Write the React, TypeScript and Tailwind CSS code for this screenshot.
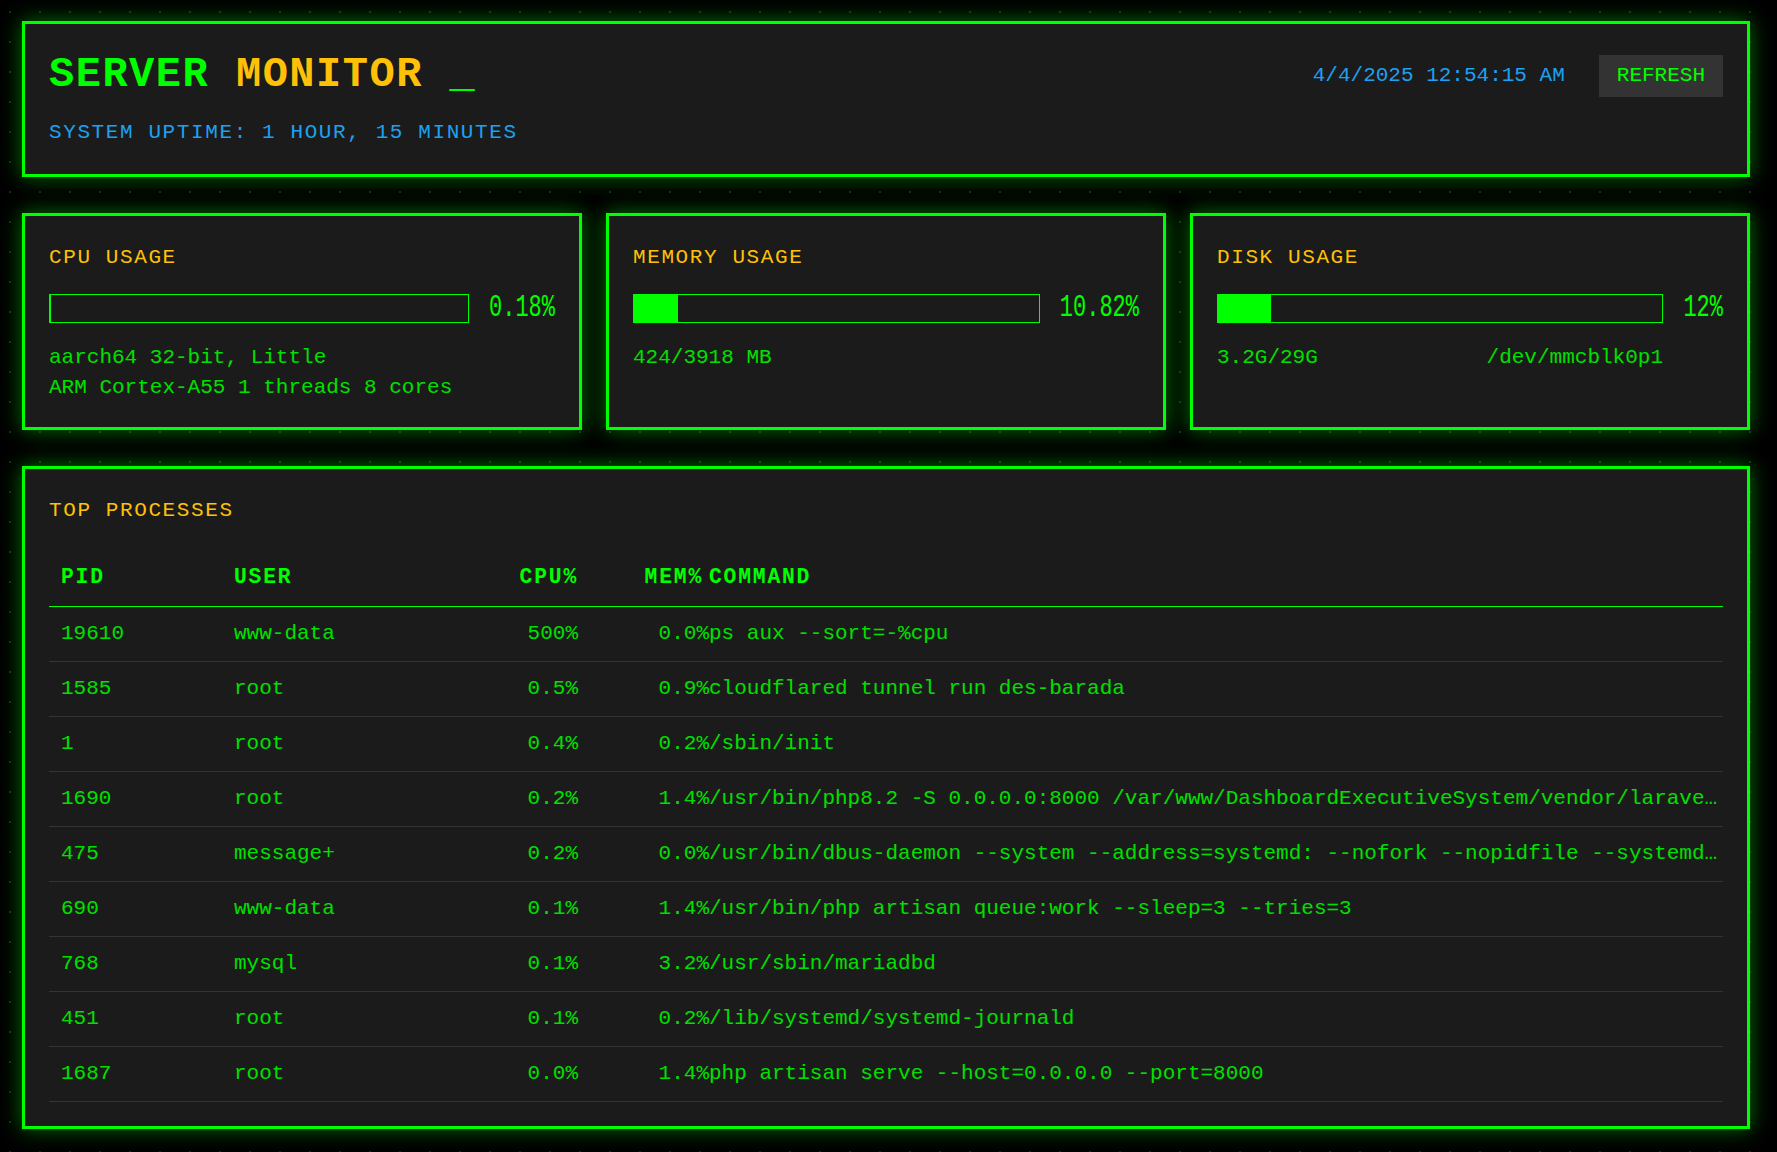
import React from "react";

type Proc = { pid: string; user: string; cpu: string; mem: string; cmd: string };

const PROCS: Proc[] = [
  { pid: "19610", user: "www-data", cpu: "500%", mem: "0.0%", cmd: "ps aux --sort=-%cpu" },
  { pid: "1585", user: "root", cpu: "0.5%", mem: "0.9%", cmd: "cloudflared tunnel run des-barada" },
  { pid: "1", user: "root", cpu: "0.4%", mem: "0.2%", cmd: "/sbin/init" },
  {
    pid: "1690",
    user: "root",
    cpu: "0.2%",
    mem: "1.4%",
    cmd: "/usr/bin/php8.2 -S 0.0.0.0:8000 /var/www/DashboardExecutiveSystem/vendor/laravel/framework/src/Illuminate/Foundation/resources/server.php",
  },
  {
    pid: "475",
    user: "message+",
    cpu: "0.2%",
    mem: "0.0%",
    cmd: "/usr/bin/dbus-daemon --system --address=systemd: --nofork --nopidfile --systemd-activation --syslog-only",
  },
  { pid: "690", user: "www-data", cpu: "0.1%", mem: "1.4%", cmd: "/usr/bin/php artisan queue:work --sleep=3 --tries=3" },
  { pid: "768", user: "mysql", cpu: "0.1%", mem: "3.2%", cmd: "/usr/sbin/mariadbd" },
  { pid: "451", user: "root", cpu: "0.1%", mem: "0.2%", cmd: "/lib/systemd/systemd-journald" },
  { pid: "1687", user: "root", cpu: "0.0%", mem: "1.4%", cmd: "php artisan serve --host=0.0.0.0 --port=8000" },
];

const box =
  "border-[3px] border-[#00ff00] bg-[#1b1b1b] p-6 shadow-[0_0_20px_rgba(0,255,0,0.45)]";

function Meter({ pct, label }: { pct: number; label: string }) {
  return (
    <div className="mt-[18px] flex h-[29px] items-center gap-5">
      <div className="h-full flex-1 border border-[#00ff00]">
        <div className="h-full bg-[#00ff00]" style={{ width: `${pct}%` }} />
      </div>
      <span className="inline-block scale-y-[1.4] font-['Liberation_Mono',monospace] text-[22px] leading-none text-[#00ff00]">
        {label}
      </span>
    </div>
  );
}

function Card({ title, pct, label, children }: { title: string; pct: number; label: string; children: React.ReactNode }) {
  return (
    <div className={box}>
      <div className="text-[21px] leading-[36px] tracking-[1.6px] text-[#ffc107]">{title}</div>
      <Meter pct={pct} label={label} />
      <div className="mt-[20px] text-[21px] leading-[30px] text-[#00e000]">{children}</div>
    </div>
  );
}

export default function App() {
  return (
    <div className="min-h-screen bg-black bg-[radial-gradient(circle,#0e300e_1px,transparent_1.6px)] bg-[size:30px_30px] bg-[position:-5px_-3px] font-['Courier_New','Nimbus_Mono_PS','FreeMono',Courier,'Liberation_Mono',monospace]">
      <div className="flex w-[1777px] flex-col gap-9 pb-6 pl-[22px] pr-[27px] pt-[21px]">
        <header className={box}>
          <div className="flex h-[55px] items-center justify-between">
            <h1 className="text-[42px] font-bold leading-[55px] tracking-[1.5px]">
              <span className="text-[#00ff00]">SERVER</span>
              <span className="text-[#ffc107]"> MONITOR</span>
              <span className="text-[#00ff00]"> _</span>
            </h1>
            <div className="flex items-center gap-[34px]">
              <span className="text-[21px] text-[#1da1f2]">4/4/2025 12:54:15 AM</span>
              <button className="bg-[#333333] px-[18px] py-[9px] text-[21px] leading-[24px] text-[#00ff00]">
                REFRESH
              </button>
            </div>
          </div>
          <p className="mt-[13px] text-[21px] leading-[34px] tracking-[1.6px] text-[#1da1f2]">
            SYSTEM UPTIME: 1 HOUR, 15 MINUTES
          </p>
        </header>

        <div className="grid grid-cols-3 gap-6">
          <Card title="CPU USAGE" pct={0.18} label="0.18%">
            <div>aarch64 32-bit, Little</div>
            <div>ARM Cortex-A55 1 threads 8 cores</div>
          </Card>
          <Card title="MEMORY USAGE" pct={10.82} label="10.82%">
            <div>424/3918 MB</div>
          </Card>
          <Card title="DISK USAGE" pct={12} label="12%">
            <div className="flex justify-between pr-[60px]">
              <span>3.2G/29G</span>
              <span>/dev/mmcblk0p1</span>
            </div>
          </Card>
        </div>

        <section className={box}>
          <div className="text-[21px] leading-[36px] tracking-[1.6px] text-[#ffc107]">TOP PROCESSES</div>
          <table className="mt-[21px] w-full table-fixed border-collapse text-[21px] leading-[24px]">
            <colgroup>
              <col className="w-[173px]" />
              <col className="w-[218px]" />
              <col className="w-[150px]" />
              <col className="w-[119px]" />
              <col />
            </colgroup>
            <thead>
              <tr className="border-b border-[#00ff00] text-[21.33px] font-bold tracking-[1.8px] text-[#00ff00]">
                <th className="pb-[17px] pl-3 pt-[15px] text-left">PID</th>
                <th className="pb-[17px] pl-3 pt-[15px] text-left">USER</th>
                <th className="pb-[17px] pr-3 pt-[15px] text-right">CPU%</th>
                <th className="pb-[17px] pr-[6px] pt-[15px] text-right">MEM%</th>
                <th className="pb-[17px] pt-[15px] text-left">COMMAND</th>
              </tr>
            </thead>
            <tbody className="text-[#00e000]">
              {PROCS.map((p) => (
                <tr key={p.pid} className="border-b border-[#333333]">
                  <td className="py-[15px] pl-3">{p.pid}</td>
                  <td className="py-[15px] pl-3">{p.user}</td>
                  <td className="py-[15px] pr-3 text-right">{p.cpu}</td>
                  <td className="py-[15px] text-right">{p.mem}</td>
                  <td className="truncate py-[15px] pr-[4px]">{p.cmd}</td>
                </tr>
              ))}
            </tbody>
          </table>
        </section>
      </div>
    </div>
  );
}
